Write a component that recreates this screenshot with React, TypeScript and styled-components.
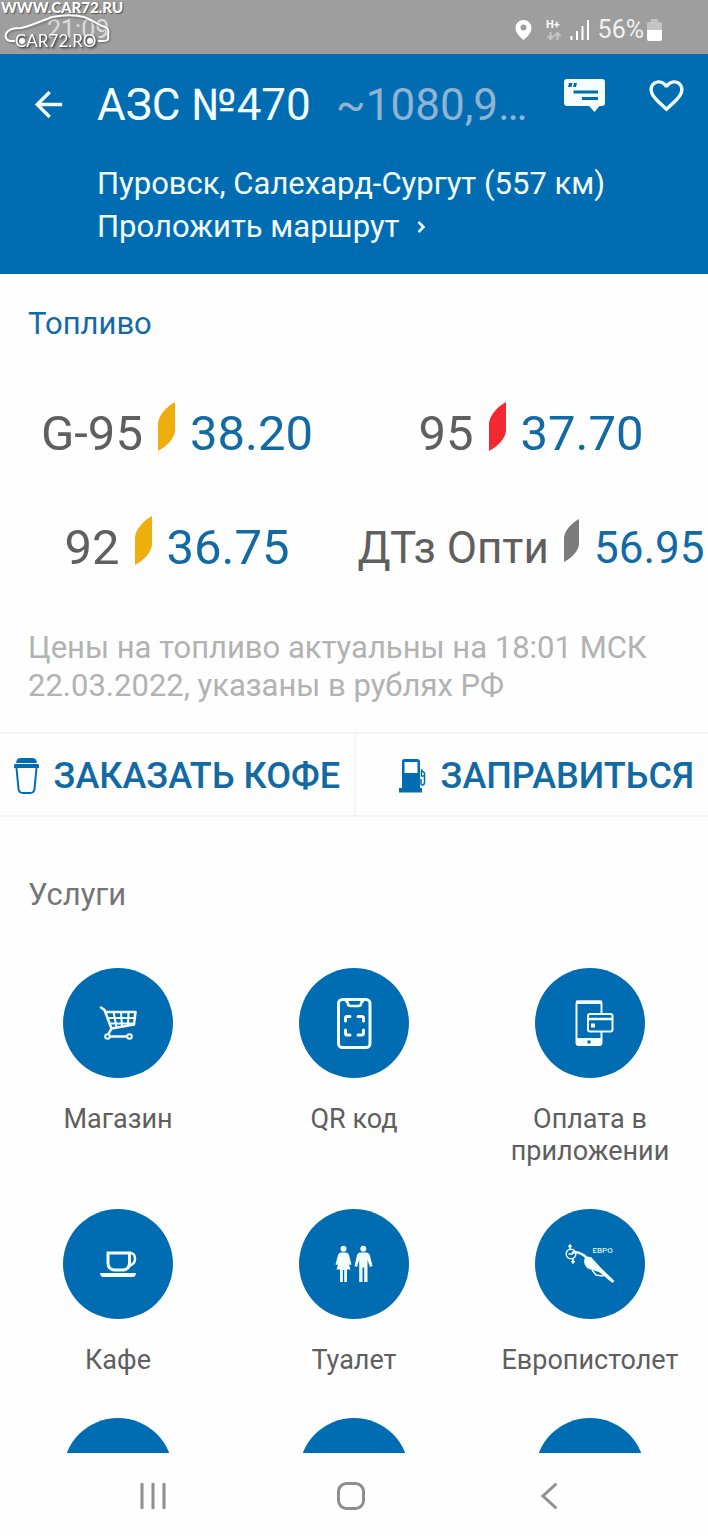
import React from "react";
import styled, { createGlobalStyle } from "styled-components";
import { MdArrowBack, MdFavoriteBorder } from "react-icons/md";

const BLUE = "#006db3";
const TEXT_BLUE = "#126aa5";
const GREY = "#5f5f5f";
const PAPER = "#fdfefd";

const GlobalStyle = createGlobalStyle`
  *, *::before, *::after { box-sizing: border-box; }
  body { margin: 0; background: ${PAPER}; font-family: Roboto, "Open Sans", sans-serif; }
  h1, h2, p { margin: 0; font-weight: 400; }
  button { font: inherit; color: inherit; background: none; border: 0; padding: 0; cursor: pointer; }
  svg { display: block; flex: none; }
`;

const Screen = styled.div`
  display: flex;
  flex-direction: column;
  height: 100vh;
  background: ${PAPER};
`;

const StatusBar = styled.div`
  position: relative;
  flex: none;
  display: flex;
  align-items: center;
  justify-content: space-between;
  height: 54px;
  padding: 5px 46px 0 47px;
  background: #9e9e9e;
  color: #f1f1f1;
  font-size: 25px;
  line-height: 30px;
`;

const Clock = styled.span`
  color: #dcdcdc;
`;

const StatusIcons = styled.div`
  display: flex;
  align-items: center;
`;

const PinSlot = styled.span`
  margin-right: 14px;
`;

const NetworkSlot = styled.span`
  margin-right: 8px;
`;

const SignalSlot = styled.span`
  margin-right: 8px;
`;

const BatterySlot = styled.span`
  margin-left: 3px;
`;

const Watermark = styled.div`
  position: absolute;
  top: 0;
  left: 1px;
  color: #fff;
  font-family: Lato, sans-serif;
  text-shadow: 1px 1px 1px #555;
`;

const WatermarkUrl = styled.div`
  font-size: 15px;
  font-weight: 900;
  line-height: 14px;
`;

const WatermarkCar = styled.svg`
  margin-left: 3px;
  filter: drop-shadow(1px 1px 1px #666);
`;

const Header = styled.header`
  flex: none;
  padding: 21px 21px 26px 28px;
  background: ${BLUE};
  color: #f4fdff;
`;

const TitleRow = styled.div`
  display: flex;
  align-items: center;
`;

const IconButton = styled.button`
  flex: none;
`;

const Title = styled.h1`
  flex: none;
  margin-left: 28px;
  font-size: 44px;
  line-height: 54px;
`;

const Distance = styled.span`
  flex: 1;
  min-width: 0;
  margin-left: 25px;
  color: #8fb3d0;
  font-size: 44px;
  line-height: 54px;
  white-space: nowrap;
`;

const HeaderActions = styled.div`
  display: flex;
  align-items: center;
  gap: 40px;
  padding-bottom: 18px;
`;

const Address = styled.div`
  display: flex;
  flex-direction: column;
  align-items: flex-start;
  margin: 28px 0 0 69px;
  font-size: 31px;
  line-height: 43px;
`;

const RouteLink = styled.a`
  display: flex;
  align-items: center;
  gap: 18px;
  color: inherit;
  text-decoration: none;
`;

const Content = styled.main`
  flex: 1;
  min-height: 0;
  overflow-y: auto;
  scrollbar-width: none;
`;

const SectionTitle = styled.h2<{ $tone: string }>`
  padding: 0 28px;
  color: ${(p) => p.$tone};
  font-size: 31px;
  line-height: 36px;
`;

const FuelSection = styled.section`
  padding-top: 32px;
`;

const FuelGrid = styled.div`
  display: grid;
  grid-template-columns: repeat(2, minmax(0, 1fr));
  grid-auto-rows: 58px;
  row-gap: 56px;
  margin-top: 63px;
`;

const FuelItem = styled.div<{ $compact?: boolean }>`
  display: flex;
  align-items: center;
  justify-content: center;
  gap: 15px;
  color: ${GREY};
  font-size: ${(p) => (p.$compact ? 44 : 49)}px;
  line-height: 58px;
  white-space: nowrap;
`;

const LeafSlot = styled.span`
  padding-bottom: 16px;
`;

const Price = styled.span`
  color: ${TEXT_BLUE};
`;

const FuelNote = styled.p`
  margin-top: 52px;
  padding: 0 28px;
  color: #b2b2b2;
  font-size: 31px;
  line-height: 38px;
`;

const Actions = styled.div`
  display: grid;
  grid-template-columns: repeat(2, minmax(0, 1fr));
  height: 85px;
  margin-top: 27px;
  border-top: 2px solid #f3f4f4;
  border-bottom: 2px solid #f3f4f4;
`;

const ActionButton = styled.button`
  display: flex;
  align-items: center;
  justify-content: flex-end;
  gap: 15px;
  padding: 3px 14px 0;
  color: ${TEXT_BLUE};
  font-size: 36px;
  font-weight: 500;
  white-space: nowrap;

  & + & {
    border-left: 2px solid #f3f4f4;
  }
`;

const ServicesSection = styled.section`
  padding-top: 60px;
`;

const ServiceGrid = styled.div`
  display: grid;
  grid-template-columns: repeat(3, minmax(0, 1fr));
  row-gap: 42px;
  margin-top: 55px;
`;

const Service = styled.div`
  display: flex;
  flex-direction: column;
  align-items: center;
  gap: 25px;
  color: ${GREY};
  font-size: 27px;
  line-height: 32px;
  text-align: center;
`;

const Disc = styled.span`
  width: 110px;
  height: 110px;
  border-radius: 50%;
  background: ${BLUE};
`;

const ServiceLabel = styled.span`
  max-width: 190px;
`;

const NavBar = styled.nav`
  flex: none;
  display: grid;
  grid-template-columns: repeat(3, 1fr);
  height: 83px;
  padding: 3px 60px 0 54px;
  background: ${PAPER};
`;

const NavButton = styled.button`
  display: flex;
  align-items: center;
  justify-content: center;
`;

const CarLogo = () => (
  <WatermarkCar width="108" height="40" viewBox="0 0 108 40" fill="none" stroke="#fff" aria-hidden="true">
    <path
      d="M11 27H6C2 26 1 23 2 20C4 15 9 14 17 14C27 12 37 7 48 3C59 1 72 1 80 3C88 6 94 10 98 12C104 13 105 16 104 21C105 26 104 27 98 27H94"
      strokeWidth="2"
    />
    <circle cx="18" cy="27" r="3" fill="#fff" stroke="none" />
    <circle cx="86" cy="27" r="3" fill="#fff" stroke="none" />
    <text x="11" y="33" fill="#fff" stroke="none" fontSize="17" fontFamily="Lato, sans-serif">
      CAR72.RO
    </text>
  </WatermarkCar>
);

const PinIcon = () => (
  <svg width="17" height="20" viewBox="0 0 17 20" aria-hidden="true">
    <path fill="#fff" fillRule="evenodd" d="M8.500 0A8 8 0 0 0 .5 8C.5 13 5 17 8.500 20C12 17 16.500 13 16.500 8A8 8 0 0 0 8.500 0ZM8.500 4.500A3 3 0 1 1 8.500 10.500A3 3 0 1 1 8.500 4.500Z" />
  </svg>
);

const NetworkIcon = () => (
  <svg width="16" height="24" viewBox="0 0 16 24" aria-hidden="true">
    <text x="0" y="10" fill="#fff" fontSize="11" fontWeight="700" fontFamily="Roboto, sans-serif">
      H+
    </text>
    <path d="M4.500 14V21M1.500 18L4.500 21L7.500 18M11.500 22V15M8.500 18L11.500 15L14.500 18" fill="none" stroke="#c6c6c6" strokeWidth="2" />
  </svg>
);

const SignalIcon = () => (
  <svg width="20" height="20" viewBox="0 0 20 20" aria-hidden="true">
    <path d="M1.500 20V16M7 20V11M12.500 20V6M18 20V0" stroke="#fff" strokeWidth="2" />
  </svg>
);

const BatteryIcon = () => (
  <svg width="15" height="22" viewBox="0 0 15 22" aria-hidden="true">
    <path fill="#c4c4c4" d="M4 0H11V3H13Q15 3 15 5V11H0V5Q0 3 2 3H4Z" />
    <path fill="#fff" d="M0 11H15V20Q15 22 13 22H2Q0 22 0 20Z" />
  </svg>
);

const ReviewIcon = () => (
  <svg width="42" height="33" viewBox="0 0 42 33" aria-hidden="true">
    <path fill="#f4fdff" d="M3 0H38Q41 0 41 3V24Q41 27 38 27H35.500L30.500 33L25 27H3Q0 27 0 24V3Q0 0 3 0Z" />
    <path fill={BLUE} d="M5 4H8.500L7.500 8H4ZM10 4H13L12 8H9Z" />
    <path stroke={BLUE} strokeWidth="3" d="M9.500 13H34M18 19.500H34" />
  </svg>
);

const ChevronIcon = () => (
  <svg width="9" height="14" viewBox="0 0 9 14" aria-hidden="true">
    <path d="M1.500 2L6.500 7L1.500 12" fill="none" stroke="#f4fdff" strokeWidth="2.500" />
  </svg>
);

const Leaf = ({ color, height }: { color: string; height: number }) => (
  <svg width={Math.round(height * 0.35)} height={height} viewBox="0 0 17 49" preserveAspectRatio="none" aria-hidden="true">
    <path fill={color} d="M17 0C8 5 1 13 0 21V49C9 44 16 37 17 29Z" />
  </svg>
);

const CoffeeIcon = () => (
  <svg width="25" height="36" viewBox="0 0 25 36" aria-hidden="true">
    <path fill={BLUE} d="M2.500 3Q3 0 7 0H18Q22 0 22.500 3L23 5H2Z" />
    <path fill={BLUE} d="M1 6H24Q25 6 25 8V10H0V8Q0 6 1 6Z" />
    <path fill="none" stroke={BLUE} strokeWidth="2" d="M2.500 10L4.500 31Q5 35 9 35H16Q20 35 20.500 31L22.500 10" />
  </svg>
);

const PumpIcon = () => (
  <svg width="27" height="34" viewBox="0 0 27 34" aria-hidden="true">
    <path fill={BLUE} fillRule="evenodd" d="M5 0H18Q21 0 21 3V29H23V33.500H0V29H3V3Q3 0 5 0ZM5.500 3V14H18.500V3Z" />
    <path fill="none" stroke={BLUE} strokeWidth="1.500" d="M22 10.500L25.500 14V23Q25.500 26 23.500 26Q22 26 22 24V20M22.500 12V17H25" />
  </svg>
);

const DiscIcon = ({ children }: { children: React.ReactNode }) => (
  <svg width="110" height="110" viewBox="0 0 110 110" fill="none" stroke="#f4fdff" strokeWidth="2.500" aria-hidden="true">
    {children}
  </svg>
);

const CartIcon = () => (
  <DiscIcon>
    <path strokeLinecap="round" strokeLinejoin="round" d="M38 39.500L41.500 42L48.500 60.500L45.500 66M43 44H72.500L71 56.500L48.500 60.500" />
    <path strokeWidth="2" d="M44.500 50H72M46.500 55.500H71M50.500 44L53.500 59M58 44L59 58M65.500 44L65 57" />
    <path d="M47 68.500H64" />
    <circle cx="44.500" cy="68.500" r="2.300" strokeWidth="2" />
    <circle cx="66.500" cy="68.500" r="2.300" strokeWidth="2" />
  </DiscIcon>
);

const QrIcon = () => (
  <DiscIcon>
    <rect x="39.500" y="31.500" width="31.500" height="48" rx="4" strokeWidth="3" />
    <path d="M46 33Q49 33 49 36Q49 38 52 38H59Q62 38 62 36Q62 33 65 33" />
    <path strokeLinecap="round" strokeWidth="3" d="M46.500 53V50Q46.500 48.500 48 48.500H51M59 48.500H62.500Q64.500 48.500 64.500 50V53M64.500 62V65Q64.500 67 62.500 67H59M51 67H48Q46.500 67 46.500 65V62" />
  </DiscIcon>
);

const PayIcon = () => (
  <DiscIcon>
    <rect x="41.500" y="33.500" width="25" height="43.500" rx="2.500" strokeWidth="2" />
    <path fill="#f4fdff" stroke="none" d="M41 32.500H67V36H41ZM41 70H67V76L65 78H43L41 76Z" />
    <circle cx="54" cy="74" r="1.800" fill={BLUE} stroke="none" />
    <rect x="53" y="46" width="24.500" height="17.500" rx="2" fill={BLUE} strokeWidth="2" />
    <path d="M53 51H77.500" />
    <rect x="56" y="55.500" width="4" height="4" fill="#f4fdff" stroke="none" />
  </DiscIcon>
);

const CafeIcon = () => (
  <DiscIcon>
    <path strokeWidth="3" d="M45 44H66.500V54Q66.500 61 59 61H52.500Q45 61 45 54Z" />
    <path strokeWidth="2.500" d="M66.500 44Q72 43.500 72 50Q72 55 66 57" />
    <path fill="#f4fdff" stroke="none" d="M37 64H73Q72.500 68 70 68H40Q37.500 68 37 64Z" />
  </DiscIcon>
);

const ToiletIcon = () => (
  <DiscIcon>
    <g fill="#f4fdff" stroke="none">
      <circle cx="44.500" cy="39.800" r="3" />
      <path d="M41.500 43.500H47.500Q49.500 44 50 46L52.500 55.500L50.500 56L49.500 54L51.500 60.500H48V73H45.200V61H43.800V73H41V60.500H37.500L39.500 54L38.500 56L36.500 55.500L39 46Q39.500 44 41.500 43.500Z" />
      <circle cx="64.300" cy="39.800" r="3" />
      <path d="M60.500 43.500H68Q70 44 70.800 46L73.500 57L71 58L68.500 51V73H65.200V58.500H63.500V73H60.200V51L58 58L55.500 57L58 46Q58.500 44 60.500 43.500Z" />
    </g>
  </DiscIcon>
);

const NozzleIcon = () => (
  <DiscIcon>
    <circle cx="36" cy="45" r="4.800" strokeWidth="1.500" />
    <path strokeWidth="1.500" d="M35 40V36M33.500 38L35 36L36.500 38M38 50V54M36.500 52L38 54L39.500 52M33.500 45H38" />
    <path strokeWidth="2.500" strokeLinecap="round" d="M38 43.500Q45 42.500 52 49" />
    <path fill="#f4fdff" stroke="none" d="M50 47.500L56 48L66 59L79.500 72L77.500 74L64 63Q60 62 58 61Q50 60 49 53Z" />
    <path strokeWidth="1.500" d="M57 61L61 66L67.500 67L69.500 65.500" />
    <text x="57.500" y="44" fill="#d9effa" stroke="none" fontSize="8" fontWeight="500" fontFamily="Roboto, sans-serif">
      ЕВРО
    </text>
  </DiscIcon>
);

const fuels = [
  { name: "G-95", price: "38.20", leaf: "#edae0e" },
  { name: "95", price: "37.70", leaf: "#f22a30" },
  { name: "92", price: "36.75", leaf: "#edae0e" },
  { name: "ДТз Опти", price: "56.95", leaf: "#7b7b7b", compact: true },
];

const services = [
  { label: "Магазин", Icon: CartIcon },
  { label: "QR код", Icon: QrIcon },
  { label: "Оплата в приложении", Icon: PayIcon },
  { label: "Кафе", Icon: CafeIcon },
  { label: "Туалет", Icon: ToiletIcon },
  { label: "Европистолет", Icon: NozzleIcon },
];

export default function App() {
  return (
    <Screen>
      <GlobalStyle />
      <StatusBar>
        <Clock>21:09</Clock>
        <StatusIcons>
          <PinSlot><PinIcon /></PinSlot>
          <NetworkSlot><NetworkIcon /></NetworkSlot>
          <SignalSlot><SignalIcon /></SignalSlot>
          <span>56%</span>
          <BatterySlot><BatteryIcon /></BatterySlot>
        </StatusIcons>
        <Watermark>
          <WatermarkUrl>WWW.CAR72.RU</WatermarkUrl>
          <CarLogo />
        </Watermark>
      </StatusBar>

      <Header>
        <TitleRow>
          <IconButton type="button"><MdArrowBack size={41} /></IconButton>
          <Title>АЗС №470</Title>
          <Distance>~1080,9…</Distance>
          <HeaderActions>
            <IconButton type="button"><ReviewIcon /></IconButton>
            <IconButton type="button"><MdFavoriteBorder size={41} /></IconButton>
          </HeaderActions>
        </TitleRow>
        <Address>
          <span>Пуровск, Салехард-Сургут (557 км)</span>
          <RouteLink href="#">
            Проложить маршрут
            <ChevronIcon />
          </RouteLink>
        </Address>
      </Header>

      <Content>
        <FuelSection>
          <SectionTitle $tone={TEXT_BLUE}>Топливо</SectionTitle>
          <FuelGrid>
            {fuels.map((f) => (
              <FuelItem key={f.name} $compact={f.compact}>
                <span>{f.name}</span>
                <LeafSlot><Leaf color={f.leaf} height={f.compact ? 43 : 49} /></LeafSlot>
                <Price>{f.price}</Price>
              </FuelItem>
            ))}
          </FuelGrid>
          <FuelNote>Цены на топливо актуальны на 18:01 МСК 22.03.2022, указаны в рублях РФ</FuelNote>
        </FuelSection>

        <Actions>
          <ActionButton type="button">
            <CoffeeIcon />
            ЗАКАЗАТЬ КОФЕ
          </ActionButton>
          <ActionButton type="button">
            <PumpIcon />
            ЗАПРАВИТЬСЯ
          </ActionButton>
        </Actions>

        <ServicesSection>
          <SectionTitle $tone="#757575">Услуги</SectionTitle>
          <ServiceGrid>
            {services.map(({ label, Icon }) => (
              <Service key={label}>
                <Disc><Icon /></Disc>
                <ServiceLabel>{label}</ServiceLabel>
              </Service>
            ))}
            {[0, 1, 2].map((i) => (
              <Service key={i}><Disc /></Service>
            ))}
          </ServiceGrid>
        </ServicesSection>
      </Content>

      <NavBar>
        <NavButton type="button">
          <svg width="26" height="26" viewBox="0 0 26 26" aria-hidden="true">
            <path d="M2 1V25M13 1V25M24 1V25" stroke="#8e8e8e" strokeWidth="3" strokeLinecap="round" />
          </svg>
        </NavButton>
        <NavButton type="button">
          <svg width="28" height="28" viewBox="0 0 28 28" aria-hidden="true">
            <rect x="1.500" y="1.500" width="25" height="25" rx="8" fill="none" stroke="#8e8e8e" strokeWidth="3" />
          </svg>
        </NavButton>
        <NavButton type="button">
          <svg width="16" height="26" viewBox="0 0 16 26" aria-hidden="true">
            <path d="M14.500 1.500L2 13L14.500 24.500" fill="none" stroke="#8e8e8e" strokeWidth="3" strokeLinecap="round" />
          </svg>
        </NavButton>
      </NavBar>
    </Screen>
  );
}
